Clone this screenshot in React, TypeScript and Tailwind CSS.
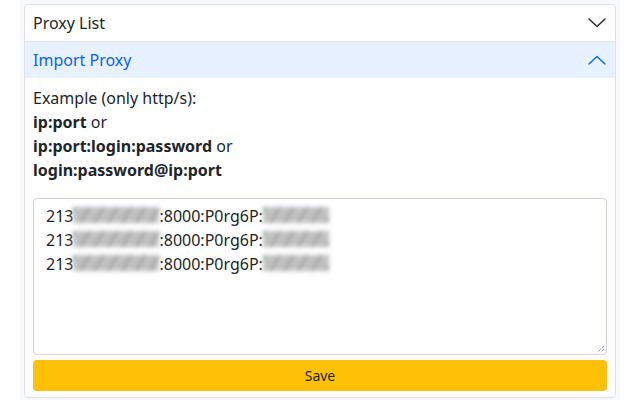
import React from "react";

function Chevron({ up, color }: { up?: boolean; color: string }) {
  return (
    <svg width="18" height="10" viewBox="0 0 18 10" fill="none">
      <path
        d={up ? "M1 9 L9 1.5 L17 9" : "M1 1 L9 8.5 L17 1"}
        stroke={color}
        strokeWidth="1.4"
        strokeLinecap="round"
        strokeLinejoin="round"
      />
    </svg>
  );
}

function Blur({ w }: { w: number }) {
  return (
    <span
      aria-hidden
      className="inline-block align-middle h-[16px] blur-[2px] opacity-85 -mt-[2px]"
      style={{
        width: w,
        backgroundImage:
          "repeating-linear-gradient(120deg, #b0b0b0 0px, #858585 3px, #d4d4d4 6px, #9c9c9c 9px, #e0e0e0 12px)",
      }}
    />
  );
}

function Line() {
  return (
    <div className="h-6 leading-6 whitespace-nowrap flex items-center">
      <span>213</span>
      <Blur w={86} />
      <span>:8000:P0rg6P:</span>
      <Blur w={66} />
    </div>
  );
}

export default function App() {
  return (
    <div className="w-[640px] h-[400px] bg-white overflow-hidden" style={{ fontFamily: '"Noto Sans", sans-serif' }}>
      <div className="mx-[20px] h-[400px] bg-[#f8f9fa] px-[4px] pt-[4px]">
        <div className="bg-white border border-[#dee2e6] rounded-[4px] w-[592px] h-[394px] overflow-hidden">
          <div className="h-[37px] flex items-center justify-between pl-[8px] pr-[9px] text-[16px] text-[#212529] border-b border-[#dee2e6]">
            <span>Proxy List</span>
            <Chevron color="#212529" />
          </div>
          <div className="h-[36px] flex items-center justify-between pl-[8px] pr-[9px] text-[16px] text-[#0c63e4] bg-[#e7f1ff]">
            <span>Import Proxy</span>
            <Chevron up color="#0c63e4" />
          </div>
          <div className="px-[8px] pt-[8px]">
            <div className="text-[16px] leading-[24px] text-[#212529]">
              <div>Example (only http/s):</div>
              <div><b>ip:port</b> or</div>
              <div><b>ip:port:login:password</b> or</div>
              <div><b>login:password@ip:port</b></div>
            </div>
            <div className="mt-[16px] h-[157px] border border-[#ced4da] rounded-[4px] px-[12px] pt-[5px] text-[16px] text-[#212529] relative">
              <Line />
              <Line />
              <Line />
              <svg className="absolute right-[1px] bottom-[1px]" width="8" height="8" viewBox="0 0 8 8">
                <path d="M7 1 L1 7 M7 4 L4 7" stroke="#666" strokeWidth="1" strokeDasharray="1 1" />
              </svg>
            </div>
            <button className="mt-[5px] w-full h-[31px] bg-[#ffc107] rounded-[4px] text-[14px] text-[#212529] flex items-center justify-center">
              Save
            </button>
          </div>
        </div>
      </div>
    </div>
  );
}
